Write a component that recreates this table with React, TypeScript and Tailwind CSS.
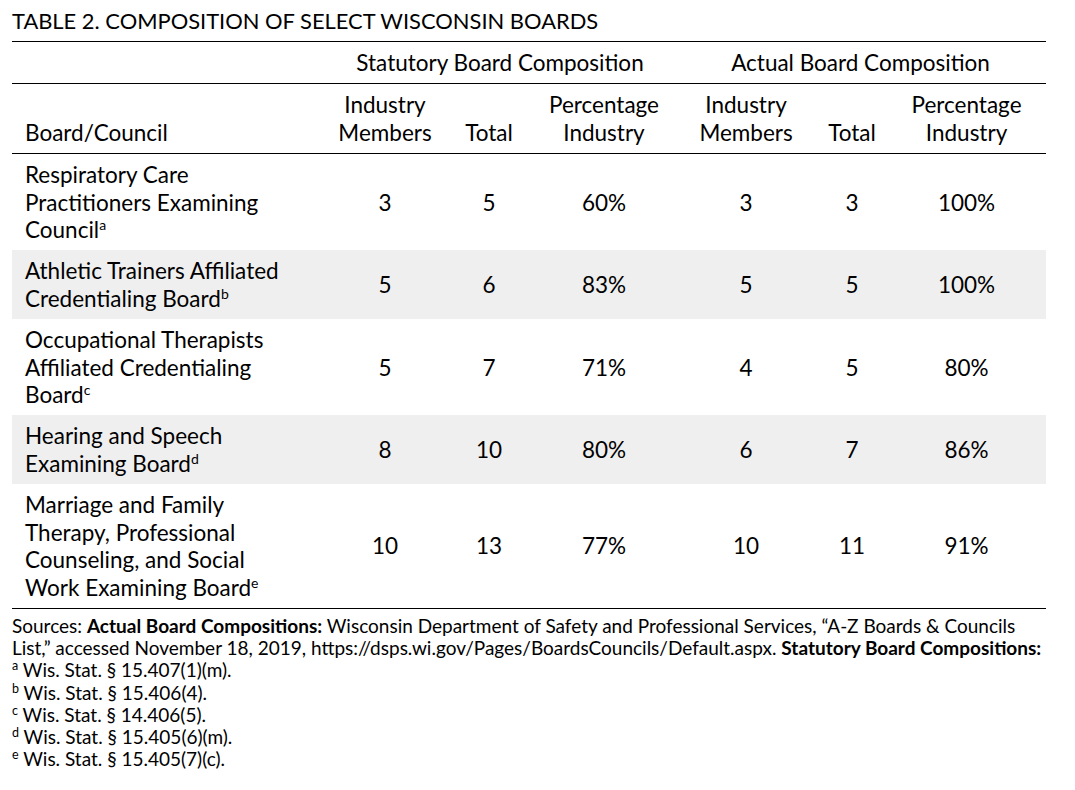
import React from "react";

const rows: { name: React.ReactNode; sup: string; v: string[]; gray: boolean }[] = [
  { name: <>Respiratory Care<br />Practitioners Examining<br />Council</>, sup: "a", v: ["3", "5", "60%", "3", "3", "100%"], gray: false },
  { name: <>Athletic Trainers Affiliated<br />Credentialing Board</>, sup: "b", v: ["5", "6", "83%", "5", "5", "100%"], gray: true },
  { name: <>Occupational Therapists<br />Affiliated Credentialing<br />Board</>, sup: "c", v: ["5", "7", "71%", "4", "5", "80%"], gray: false },
  { name: <>Hearing and Speech<br />Examining Board</>, sup: "d", v: ["8", "10", "80%", "6", "7", "86%"], gray: true },
  { name: <>Marriage and Family<br />Therapy, Professional<br />Counseling, and Social<br />Work Examining Board</>, sup: "e", v: ["10", "13", "77%", "10", "11", "91%"], gray: false },
];

const notes = [
  ["a", "Wis. Stat. § 15.407(1)(m)."],
  ["b", "Wis. Stat. § 15.406(4)."],
  ["c", "Wis. Stat. § 14.406(5)."],
  ["d", "Wis. Stat. § 15.405(6)(m)."],
  ["e", "Wis. Stat. § 15.405(7)(c)."],
];

export default function App() {
  return (
    <div className="w-[1075px] h-[790px] bg-white text-black font-['Lato',sans-serif] pl-[12px] pr-[29px] pt-[6px]">
      <div className="text-[21.9px] leading-[30px] h-[35px]">TABLE 2. COMPOSITION OF SELECT WISCONSIN BOARDS</div>
      <table className="w-[1034px] table-fixed border-collapse text-[22.5px] leading-[27.4px]">
        <colgroup>
          <col className="w-[313px]" />
          <col className="w-[120px]" />
          <col className="w-[88px]" />
          <col className="w-[142px]" />
          <col className="w-[142px]" />
          <col className="w-[70px]" />
          <col className="w-[159px]" />
        </colgroup>
        <thead>
          <tr className="border-t border-black border-b">
            <th className="font-normal py-[7px]"></th>
            <th colSpan={3} className="font-normal py-[7px] text-center">Statutory Board Composition</th>
            <th colSpan={3} className="font-normal py-[7px] text-center">Actual Board Composition</th>
          </tr>
          <tr className="border-b border-black">
            <th className="font-normal align-bottom text-left pl-[13px] py-[7px]">Board/Council</th>
            <th className="font-normal align-bottom text-center py-[7px]">Industry<br />Members</th>
            <th className="font-normal align-bottom text-center py-[7px]">Total</th>
            <th className="font-normal align-bottom text-center py-[7px]">Percentage<br />Industry</th>
            <th className="font-normal align-bottom text-center py-[7px]">Industry<br />Members</th>
            <th className="font-normal align-bottom text-center py-[7px]">Total</th>
            <th className="font-normal align-bottom text-center py-[7px]">Percentage<br />Industry</th>
          </tr>
        </thead>
        <tbody>
          {rows.map((r, i) => (
            <tr key={i} className={`${r.gray ? "bg-[#efefef]" : "bg-white"} ${i === rows.length - 1 ? "border-b border-black" : ""}`}>
              <td className="pl-[13px] py-[7px] align-middle">
                {r.name}
                <sup className="text-[14px] leading-none relative top-[-8px] align-baseline">{r.sup}</sup>
              </td>
              {r.v.map((v, j) => (
                <td key={j} className="text-center align-middle py-[7px]">{v}</td>
              ))}
            </tr>
          ))}
        </tbody>
      </table>
      <div className="text-[19px] leading-[22.2px] pt-[6px] whitespace-nowrap">
        <div>
          Sources: <b>Actual Board Compositions:</b> Wisconsin Department of Safety and Professional Services, “A-Z Boards &amp; Councils
          <br />
          List,” accessed November 18, 2019, https://dsps.wi.gov/Pages/BoardsCouncils/Default.aspx. <b>Statutory Board Compositions:</b>
        </div>
        {notes.map(([s, t]) => (
          <div key={s}>
            <sup className="text-[12.5px] leading-none relative top-[-7px] align-baseline">{s}</sup> {t}
          </div>
        ))}
      </div>
    </div>
  );
}
